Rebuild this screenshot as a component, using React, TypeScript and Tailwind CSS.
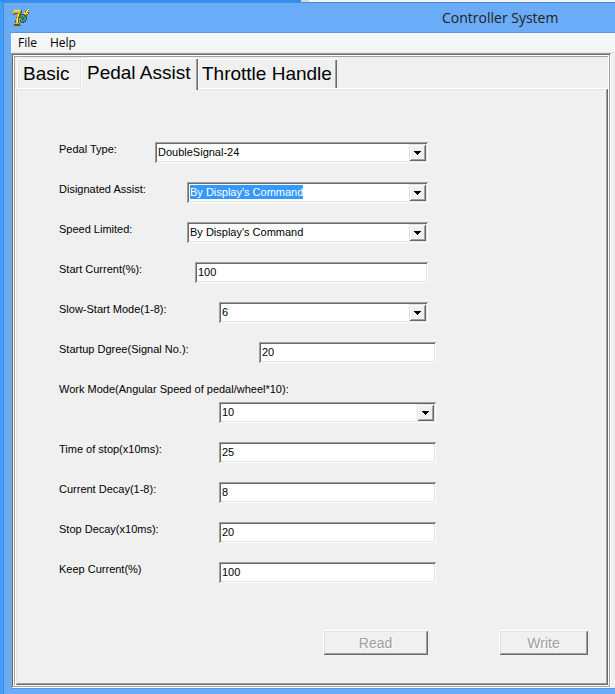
import { useState } from "react"

const FIELDS = [
  { id: "pedal", label: "Pedal Type:", kind: "combo", value: "DoubleSignal-24", width: "w-[273px]" },
  { id: "assist", label: "Disignated Assist:", kind: "combo", value: "By Display's Command", width: "w-[241px]", active: true },
  { id: "speed", label: "Speed Limited:", kind: "combo", value: "By Display's Command", width: "w-[241px]" },
  { id: "start", label: "Start Current(%):", kind: "edit", value: "100", width: "w-[233px]" },
  { id: "slow", label: "Slow-Start Mode(1-8):", kind: "combo", value: "6", width: "w-[209px]" },
  { id: "degree", label: "Startup Dgree(Signal No.):", kind: "edit", value: "20", width: "w-[177px]", wide: true },
  { id: "work", label: "Work Mode(Angular Speed of pedal/wheel*10):", kind: "combo", value: "10", width: "w-[217px]", wide: true, stacked: true },
  { id: "stop", label: "Time of stop(x10ms):", kind: "edit", value: "25", width: "w-[217px]", wide: true },
  { id: "decay", label: "Current Decay(1-8):", kind: "edit", value: "8", width: "w-[217px]", wide: true },
  { id: "stopdecay", label: "Stop Decay(x10ms):", kind: "edit", value: "20", width: "w-[217px]", wide: true },
  { id: "keep", label: "Keep Current(%)", kind: "edit", value: "100", width: "w-[217px]", wide: true },
]

type Field = (typeof FIELDS)[number]

const TABS = [
  { name: "Basic", width: "w-16", pad: "pl-[5px]" },
  { name: "Pedal Assist", width: "w-[117px]", pad: "pl-[5px]" },
  { name: "Throttle Handle", width: "w-[139px]", pad: "pl-[3px]" },
]

// Classic 3D edges
const SUNKEN =
  "shadow-[inset_1px_1px_#a0a0a0,inset_-1px_-1px_#fff,inset_2px_2px_#696969,inset_-2px_-2px_#e3e3e3]"
const RAISED =
  "shadow-[inset_1px_1px_#fff,inset_-1px_-1px_#696969,inset_2px_2px_#e3e3e3,inset_-2px_-2px_#a0a0a0]"

function AppIcon() {
  return (
    <svg width="18" height="18" viewBox="0 0 18 18" shapeRendering="crispEdges" aria-hidden="true">
      {/* gold seven */}
      <path d="M1 1h9v3h-1v2h-1v3h-1v5h1v2h1v1h-7v-2h1v-4h1v-3h1v-2h1v-1h-3v1h-2z" fill="#6b560c" />
      <path d="M1 1h8v2h-1v2h-1v3h-1v6h1v1h-4v-1h1v-5h1v-3h1v-2h-4v1h-1z" fill="#d9bf25" />
      <path d="M2 1h6v1h-6zM6 5h1v2h-1zM5 8h1v5h-1z" fill="#fff27a" />
      {/* globe */}
      <path d="M9 5h4v1h1v1h1v4h-1v2h-2v1h-3v-1h-1v-7h1z" fill="#31506b" />
      <path d="M9 6h3v1h1v1h1v3h-1v1h-2v1h-2v-2h-1v-3h1z" fill="#6f8f9c" />
      <path d="M10 7h1v1h2v2h-1v1h-2v-1h-1v-2h1zM9 11h1v1h-1z" fill="#178a35" />
      {/* spark */}
      <path d="M16 0h1v2h-1v1h1v2h-1v1h-1v1h-2v-1h-1v-3h1v-1h2v-1h1z" fill="#77620a" />
      <path d="M16 0h1v1h-1v2h-1v1h1v1h-2v1h-1v-1h-1v-2h1v1h1v-2h1v-1h1z" fill="#ffef28" />
    </svg>
  )
}

function Combo({ field }: { field: Field }) {
  return (
    <div className={`flex h-[21px] items-center bg-white p-0.5 ${field.width} ${SUNKEN}`}>
      <div className="flex min-w-0 flex-1 items-center pb-0.5 pl-px">
        <select
          id={field.id}
          defaultValue={field.value}
          className={`h-3.5 appearance-none leading-3.5 outline-none ${
            field.active ? "field-sizing-content bg-[#3399ff] text-white" : "w-full bg-white text-black"
          }`}
        >
          <option>{field.value}</option>
        </select>
      </div>
      <span className="flex size-[17px] items-center justify-center bg-[#f0f0f0] shadow-[inset_1px_1px_#e3e3e3,inset_-1px_-1px_#696969,inset_2px_2px_#fff,inset_-2px_-2px_#a0a0a0]">
        <svg width="7" height="4" viewBox="0 0 7 4" shapeRendering="crispEdges" aria-hidden="true">
          <path d="M0 0h7v1h-1v1h-1v1h-1v1h-1v-1h-1v-1h-1v-1h-1z" />
        </svg>
      </span>
    </div>
  )
}

function Row({ field }: { field: Field }) {
  return (
    <div
      className={`flex ${field.wide ? "w-[377px]" : "w-[369px]"} ${
        field.stacked ? "flex-col items-end" : "items-start justify-between"
      }`}
    >
      <label
        htmlFor={field.id}
        className={`whitespace-nowrap leading-3.5 ${field.stacked ? "h-5 self-start" : ""}`}
      >
        {field.label}
      </label>
      {field.kind === "combo" ? (
        <Combo field={field} />
      ) : (
        <input
          id={field.id}
          type="text"
          defaultValue={field.value}
          className={`h-[21px] bg-white px-[3px] pb-0.5 text-black outline-none ${field.width} ${SUNKEN}`}
        />
      )}
    </div>
  )
}

export default function App() {
  const [tab, setTab] = useState("Pedal Assist")

  return (
    <div className="flex min-h-screen flex-col bg-[#439eff] font-['Liberation_Sans',Arial,sans-serif] text-[11px] text-black">
      {/* Strip of the desktop above the window */}
      <div className="flex h-0.5">
        <div className="w-[301px] bg-[#2f8ff5]" />
        <div className="w-2 bg-[#d4d8dc]" />
        <div className="flex-1 bg-[#f4f5f6]" />
      </div>

      <div className="ml-[3px] flex flex-1 flex-col border-l border-t border-[#4a8bd0] bg-[#6aacf7] pb-[5px] pl-[7px]">
        <header className="flex h-[30px] items-center border-b border-[#5a97dc] font-['Open_Sans','Noto_Sans',sans-serif]">
          <div className="w-[431px] pl-px">
            <AppIcon />
          </div>
          <h1 className="whitespace-nowrap text-sm text-[#222]">Controller System</h1>
        </header>

        <main className="flex flex-1 flex-col border-b border-[#5a97dc] bg-[#f0f0f0]">
          <nav className="flex h-5 shrink-0 items-center gap-[13px] border-b border-[#e3e5e8] bg-[#f5f6f7] pl-[7px] font-['Open_Sans','Noto_Sans',sans-serif] text-xs">
            <button type="button">File</button>
            <button type="button">Help</button>
          </nav>

          <div className="mr-1 flex flex-1 flex-col pb-[3px] pl-1 pr-[3px] pt-1 shadow-[inset_1px_1px_#a0a0a0,inset_-1px_-1px_#fff,inset_2px_2px_#696969,inset_-2px_-2px_#a0a0a0,inset_3px_3px_#fff,inset_-3px_-3px_#fff,inset_4px_4px_#a0a0a0]">
            <div role="tablist" className="flex h-[31px] items-end pl-0.5 text-[19px]">
              {TABS.map((t) => (
                <button
                  key={t.name}
                  type="button"
                  role="tab"
                  aria-selected={tab === t.name}
                  onClick={() => setTab(t.name)}
                  className={`shrink-0 whitespace-nowrap border-l border-t border-white bg-[#f0f0f0] text-left ${t.width} ${t.pad} ${
                    tab === t.name ? "relative z-10 -mb-0.5 h-8 pb-1" : "h-[29px]"
                  } ${
                    t.name === "Basic"
                      ? "shadow-[inset_1px_1px_#e3e3e3,inset_-1px_0_#e3e3e3]"
                      : "shadow-[inset_-1px_0_#696969,inset_-2px_0_#a0a0a0]"
                  }`}
                >
                  {t.name}
                </button>
              ))}
            </div>

            <form className={`flex-1 pl-11 pr-5 pt-[54px] ${RAISED}`}>
              <div className="flex flex-col gap-[19px]">
                {FIELDS.map((f) => (
                  <Row key={f.id} field={f} />
                ))}
              </div>
              <div className="mt-[47px] flex justify-end gap-[71px] pb-7 text-sm text-[#a0a0a0]">
                <button type="button" disabled className={`h-[25px] w-[105px] text-shadow-[1px_1px_#fff] ${RAISED}`}>
                  Read
                </button>
                <button type="button" disabled className={`h-[25px] w-[89px] text-shadow-[1px_1px_#fff] ${RAISED}`}>
                  Write
                </button>
              </div>
            </form>
          </div>
        </main>
      </div>
    </div>
  )
}
